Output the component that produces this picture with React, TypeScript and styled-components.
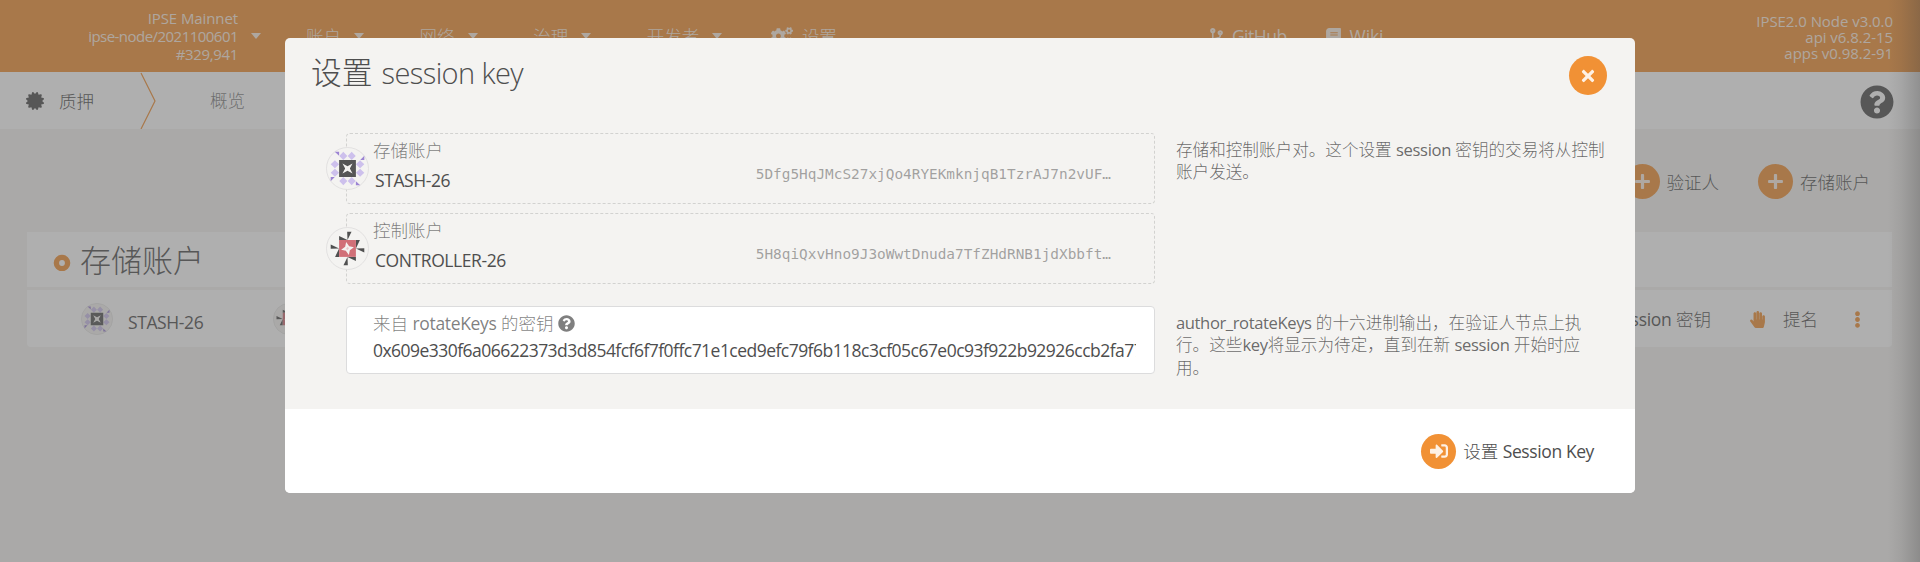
import React from 'react';
import styled, { createGlobalStyle } from 'styled-components';
import {
  FaBook,
  FaCertificate,
  FaCodeBranch,
  FaCogs,
  FaEllipsisV,
  FaHandPaper,
  FaPlus,
  FaQuestionCircle,
  FaSignInAlt,
  FaTimes,
} from 'react-icons/fa';

const ORANGE = '#f19135';
const PAGE = '#f4f3f1';

const GlobalStyle = createGlobalStyle`
  * { box-sizing: border-box; }
  html, body { margin: 0; padding: 0; }
  body {
    width: 1920px;
    height: 562px;
    overflow: hidden;
    background: ${PAGE};
    color: #4e4e4e;
    font: 300 17.5px/24px "Open Sans", "Noto Sans CJK SC", sans-serif;
    white-space: nowrap;
  }
  svg { display: block; flex: none; }
`;

const Screen = styled.div`
  position: relative;
  width: 1920px;
  height: 562px;
  overflow: hidden;
`;

const Latin = styled.span<{ $tracking: number }>`
  font-weight: 400;
  letter-spacing: ${(p) => p.$tracking}px;
`;

const TopBar = styled.header`
  display: flex;
  height: 72px;
  background: ${ORANGE};
  color: rgba(255, 255, 255, 0.85);
`;

const NodeInfo = styled.div`
  display: flex;
  align-items: center;
  justify-content: flex-end;
  gap: 13px;
  width: 261px;
`;

const Lines = styled.div<{ $line: number }>`
  display: flex;
  flex-direction: column;
  align-items: flex-end;
  font-size: 15px;
  line-height: ${(p) => p.$line}px;
`;

const Caret = styled.i`
  width: 0;
  height: 0;
  border: 5.5px solid transparent;
  border-top: 6.5px solid currentColor;
  border-bottom: 0;
`;

const Menu = styled.nav`
  display: flex;
  align-items: center;
  gap: 55.6px;
  margin-left: 45px;
`;

const MenuItem = styled.div<{ $gap?: number }>`
  display: flex;
  align-items: center;
  gap: ${(p) => p.$gap ?? 13}px;
`;

const SettingsItem = styled(MenuItem)`
  margin-left: -7px;
`;

const Links = styled.nav`
  display: flex;
  align-items: center;
  gap: 38px;
  margin-left: 371px;
`;

const Versions = styled.div`
  display: flex;
  align-items: center;
  margin-left: auto;
  padding: 2px 27px 0 0;
`;

const TabBar = styled.div`
  display: flex;
  align-items: center;
  height: 57px;
  padding: 0 26px;
  background: #fff;
`;

const TabTitle = styled.div`
  display: flex;
  align-items: center;
  gap: 15px;
  width: 114px;
`;

const Tab = styled.div`
  margin: -1px 0 0 54px;
  color: rgba(78, 78, 78, 0.75);
`;

const HelpMark = styled.div`
  margin-left: auto;
  padding-top: 3px;
`;

const Actions = styled.div`
  display: flex;
  justify-content: flex-end;
  gap: 39px;
  padding: 35px 50px 0 0;
  height: 103px;
`;

const Action = styled.div`
  display: flex;
  align-items: center;
  height: 35px;
  gap: 7px;
`;

const Round = styled.span<{ $w?: number; $h?: number }>`
  display: flex;
  align-items: center;
  justify-content: center;
  width: ${(p) => p.$w ?? 35}px;
  height: ${(p) => p.$h ?? 35}px;
  border-radius: 50%;
  background: ${ORANGE};
  color: rgba(255, 255, 255, 0.87);
`;

const Table = styled.section`
  display: flex;
  flex-direction: column;
  gap: 3px;
  margin: 0 28px 0 27px;
`;

const TableHead = styled.div`
  display: flex;
  align-items: center;
  gap: 9px;
  height: 55px;
  padding: 0 0 0 26px;
  background: #fff;
  font-size: 31px;
  color: #4e4e4e;
`;

const TableRow = styled.div`
  display: flex;
  align-items: center;
  height: 57px;
  padding: 0 26px 0 54px;
  border-radius: 0 0 4px 4px;
  background: #fff;
`;

const RowName = styled.span`
  width: 145px;
  margin: 6px 0 0 15px;
  font-weight: 400;
  letter-spacing: -0.4px;
`;

const RowTools = styled.div`
  display: flex;
  align-items: center;
  margin-left: auto;
  padding-top: 1px;
  color: #4e4e4e;
`;

const Tinted = styled.span<{ $left: number; $right: number }>`
  color: ${ORANGE};
  margin: 0 ${(p) => p.$right}px 0 ${(p) => p.$left}px;
`;

const Overlay = styled.div`
  position: absolute;
  inset: 0;
  padding: 38px 0 0 285px;
  background: rgba(96, 96, 96, 0.5);
`;

const EdgeShade = styled.div`
  position: absolute;
  top: 0;
  right: 0;
  width: 32px;
  height: 100%;
  background: linear-gradient(to right, rgba(60, 60, 60, 0), rgba(60, 60, 60, 0.08) 40%, rgba(60, 60, 60, 0.27));
`;

const Modal = styled.div`
  width: 1350px;
  height: 455px;
  border-radius: 5px;
  overflow: hidden;
  background: ${PAGE};
`;

const ModalHead = styled.div`
  display: flex;
  align-items: center;
  justify-content: space-between;
  height: 95px;
  padding: 0 28px 20px 26px;
`;

const ModalTitle = styled.h1`
  display: flex;
  align-items: baseline;
  gap: 9px;
  margin: 0;
  padding-bottom: 7px;
  font-size: 30.8px;
  font-weight: 300;
  line-height: 40px;
`;

const TitleLatin = styled.span`
  font-size: 29px;
  letter-spacing: -0.6px;
`;

const ModalBody = styled.div`
  display: flex;
  flex-direction: column;
  height: 276px;
`;

const FieldRow = styled.div<{ $top?: number }>`
  display: flex;
  gap: 21px;
  margin-top: ${(p) => p.$top ?? 0}px;
  padding-left: 61px;
`;

const FieldGroup = styled.div`
  display: flex;
  flex-direction: column;
  gap: 9px;
`;

const AccountField = styled.div`
  position: relative;
  width: 809px;
  height: 71px;
  padding: 4px 43px 0 26px;
  border: 1px dashed #d2d2d0;
  border-radius: 4px;
`;

const FieldLabel = styled.div`
  display: flex;
  align-items: center;
  gap: 5px;
  height: 24px;
  color: rgba(78, 78, 78, 0.72);
`;

const AccountLine = styled.div`
  display: flex;
  justify-content: space-between;
  height: 24px;
  margin-top: 6px;
  padding-left: 2px;
`;

const AccountName = styled.span`
  font-weight: 400;
  letter-spacing: -0.42px;
`;

const Address = styled.span`
  margin-top: -6px;
  font-family: "DejaVu Sans Mono", monospace;
  font-size: 14.4px;
  color: rgba(78, 78, 78, 0.5);
`;

const IconSlot = styled.span`
  position: absolute;
  left: -21px;
  top: 13px;
`;

const KeyField = styled.div`
  width: 809px;
  height: 68px;
  padding: 4px 18px 0 26px;
  border: 1px solid #dcdcdd;
  border-radius: 4px;
  background: #fff;
`;

const KeyValue = styled.div`
  overflow: hidden;
  margin-top: 3px;
  font-weight: 400;
  letter-spacing: -0.53px;
`;

const HelpText = styled.p`
  margin: 6px 0 0;
  font-size: 16.6px;
  line-height: 22.3px;
  color: rgba(78, 78, 78, 0.84);
`;

const ModalFoot = styled.div`
  display: flex;
  align-items: center;
  justify-content: flex-end;
  height: 84px;
  padding-right: 41px;
  background: #fff;
`;

const TURNS = [0, 90, 180, 270];

function StashIcon({ size }: { size: number }) {
  return (
    <svg width={size} height={size} viewBox="-64 -64 128 128">
      <circle r="62.5" fill={PAGE} stroke="#dedddc" strokeWidth="2.5" />
      {TURNS.map((turn) => (
        <g key={turn} transform={`rotate(${turn})`}>
          <path d="M-38-50h13v12z" fill="#9c84d3" />
          <path d="M-12.5-50l12 12.5-12 12.5-12-12.5zM12.5-50l12 12.5-12 12.5-12-12.5z" fill="#cdc0ec" />
        </g>
      ))}
      <path d="M-25-25h50v50h-50z" fill="#555" />
      <path d="M-15-15L0-7 15-15 7 0 15 15 0 7-15 15-7 0z" fill={PAGE} />
    </svg>
  );
}

function ControllerIcon({ size }: { size: number }) {
  return (
    <svg width={size} height={size} viewBox="-64 -64 128 128">
      <circle r="62.5" fill={PAGE} stroke="#dedddc" strokeWidth="2.5" />
      {TURNS.map((turn) => (
        <path key={turn} transform={`rotate(${turn})`} d="M-1-50h13L0-25zM-25-37L0-25h-25z" fill="#505050" />
      ))}
      <path d="M-25-25h50v50h-50z" fill="#d17078" />
      <path d="M-4-19L5-7 19-4 7 5 4 19-5 7-19 4-7-5z" fill={PAGE} />
      <path d="M1-5l3 5-5 5-3-5z" fill="#eac9cb" />
    </svg>
  );
}

const MENUS = ['账户', '网络', '治理', '开发者'];

export default function App() {
  return (
    <Screen>
      <GlobalStyle />
      <TopBar>
        <NodeInfo>
          <Lines $line={18}>
            <Latin $tracking={-0.1}>IPSE Mainnet</Latin>
            <Latin $tracking={-0.53}>ipse-node/2021100601</Latin>
            <Latin $tracking={-0.35}>#329,941</Latin>
          </Lines>
          <Caret />
        </NodeInfo>
        <Menu>
          {MENUS.map((name) => (
            <MenuItem key={name}>
              {name}
              <Caret />
            </MenuItem>
          ))}
          <SettingsItem $gap={9}>
            <FaCogs size={22} />
            设置
          </SettingsItem>
        </Menu>
        <Links>
          <MenuItem $gap={7}>
            <FaCodeBranch size={17} />
            <Latin $tracking={-0.5}>GitHub</Latin>
          </MenuItem>
          <MenuItem $gap={8}>
            <FaBook size={17} />
            <Latin $tracking={-0.1}>Wiki</Latin>
          </MenuItem>
        </Links>
        <Versions>
          <Lines $line={16}>
            <Latin $tracking={-0.05}>IPSE2.0 Node v3.0.0</Latin>
            <Latin $tracking={-0.05}>api v6.8.2-15</Latin>
            <Latin $tracking={-0.05}>apps v0.98.2-91</Latin>
          </Lines>
        </Versions>
      </TopBar>
      <TabBar>
        <TabTitle>
          <FaCertificate size={18} />
          质押
        </TabTitle>
        <svg width="16" height="57" viewBox="0 0 16 57">
          <path d="M1 1l14 28L1 57" fill="none" stroke={ORANGE} strokeWidth="1.2" />
        </svg>
        <Tab>概览</Tab>
        <HelpMark>
          <FaQuestionCircle size={34} />
        </HelpMark>
      </TabBar>
      <Actions>
        <Action>
          <Round><FaPlus size={17} /></Round>
          验证人
        </Action>
        <Action>
          <Round><FaPlus size={17} /></Round>
          存储账户
        </Action>
      </Actions>
      <Table>
        <TableHead>
          <svg width="18" height="22" viewBox="0 0 18 22">
            <circle cx="9" cy="14" r="5.6" fill="none" stroke={ORANGE} strokeWidth="5.4" />
          </svg>
          存储账户
        </TableHead>
        <TableRow>
          <StashIcon size={32} />
          <RowName>STASH-26</RowName>
          <ControllerIcon size={32} />
          <RowTools>
            <span><Latin $tracking={-0.3}>Session</Latin> 密钥</span>
            <Tinted $left={38} $right={17}><FaHandPaper size={17} /></Tinted>
            提名
            <Tinted $left={31} $right={0}><FaEllipsisV size={17} /></Tinted>
          </RowTools>
        </TableRow>
      </Table>
      <Overlay>
        <Modal>
          <ModalHead>
            <ModalTitle>
              设置
              <TitleLatin>session key</TitleLatin>
            </ModalTitle>
            <Round $w={38} $h={39}><FaTimes size={18} /></Round>
          </ModalHead>
          <ModalBody>
            <FieldRow>
              <FieldGroup>
                <AccountField>
                  <IconSlot><StashIcon size={43} /></IconSlot>
                  <FieldLabel>存储账户</FieldLabel>
                  <AccountLine>
                    <AccountName>STASH-26</AccountName>
                    <Address>5Dfg5HqJMcS27xjQo4RYEKmknjqB1TzrAJ7n2vUF…</Address>
                  </AccountLine>
                </AccountField>
                <AccountField>
                  <IconSlot><ControllerIcon size={43} /></IconSlot>
                  <FieldLabel>控制账户</FieldLabel>
                  <AccountLine>
                    <AccountName>CONTROLLER-26</AccountName>
                    <Address>5H8qiQxvHno9J3oWwtDnuda7TfZHdRNB1jdXbbft…</Address>
                  </AccountLine>
                </AccountField>
              </FieldGroup>
              <HelpText>
                存储和控制账户对。这个设置 <Latin $tracking={-0.35}>session</Latin> 密钥的交易将从控制<br />账户发送。
              </HelpText>
            </FieldRow>
            <FieldRow $top={22}>
              <KeyField>
                <FieldLabel>
                  <span>来自 <Latin $tracking={-0.35}>rotateKeys</Latin> 的密钥</span>
                  <FaQuestionCircle size={17} />
                </FieldLabel>
                <KeyValue>
                  0x609e330f6a06622373d3d854fcf6f7f0ffc71e1ced9efc79f6b118c3cf05c67e0c93f922b92926ccb2fa77
                </KeyValue>
              </KeyField>
              <HelpText>
                <Latin $tracking={-0.4}>author_rotateKeys</Latin> 的十六进制输出，在验证人节点上执<br />
                行。这些<Latin $tracking={-0.35}>key</Latin>将显示为待定，直到在新 <Latin $tracking={-0.35}>session</Latin> 开始时应<br />
                用。
              </HelpText>
            </FieldRow>
          </ModalBody>
          <ModalFoot>
            <Action>
              <Round><FaSignInAlt size={18} /></Round>
              <span>设置 <Latin $tracking={-0.4}>Session Key</Latin></span>
            </Action>
          </ModalFoot>
        </Modal>
      </Overlay>
      <EdgeShade />
    </Screen>
  );
}
